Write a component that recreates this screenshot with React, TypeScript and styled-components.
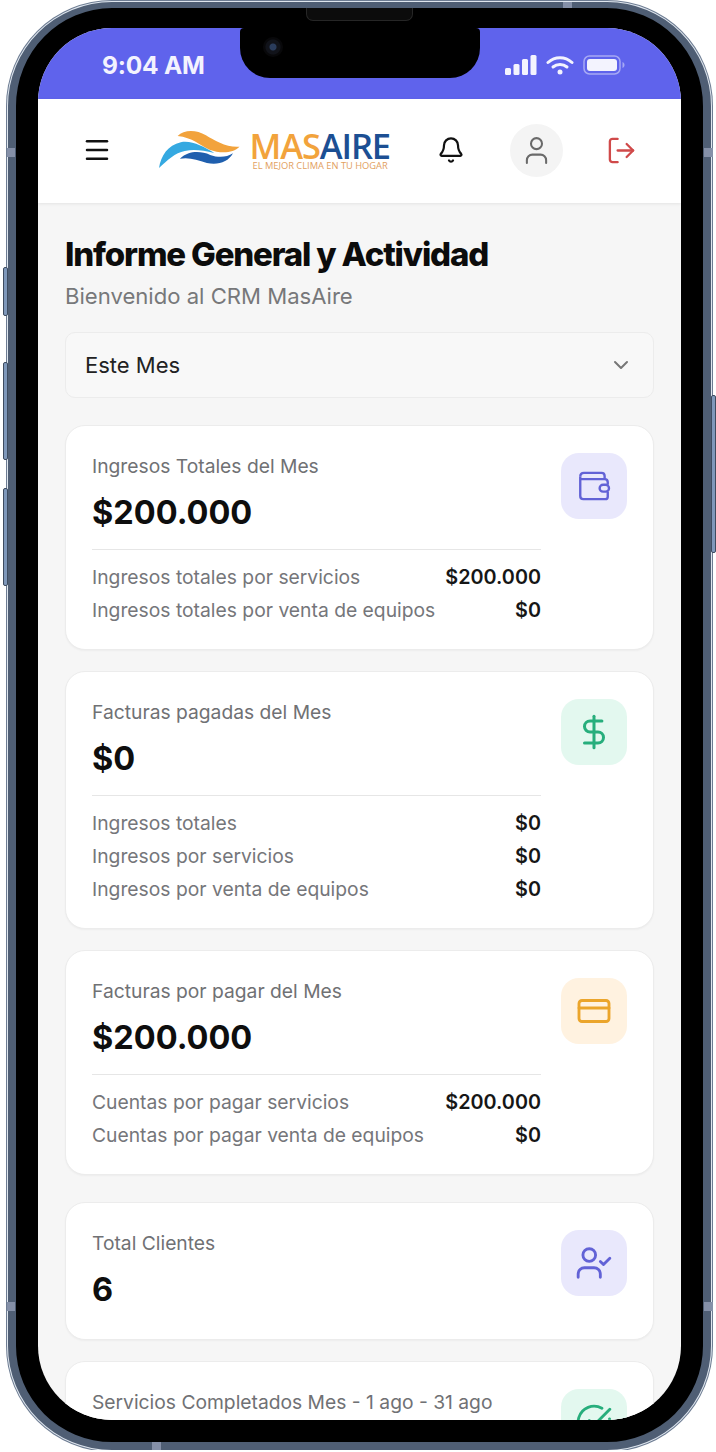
import React, { FC, ReactNode } from 'react';
import styled, { createGlobalStyle } from 'styled-components';
import { Bell, ChevronDown, CircleCheckBig, CreditCard, DollarSign, LogOut, Menu, User, UserCheck } from 'lucide-react';

const summaryCards = [
	{
		title: 'Ingresos Totales del Mes',
		value: '$200.000',
		tone: 'violet',
		icon: 'wallet',
		rows: [
			['Ingresos totales por servicios', '$200.000'],
			['Ingresos totales por venta de equipos', '$0'],
		],
	},
	{
		title: 'Facturas pagadas del Mes',
		value: '$0',
		tone: 'green',
		icon: 'dollar',
		rows: [
			['Ingresos totales', '$0'],
			['Ingresos por servicios', '$0'],
			['Ingresos por venta de equipos', '$0'],
		],
	},
	{
		title: 'Facturas por pagar del Mes',
		value: '$200.000',
		tone: 'amber',
		icon: 'card',
		rows: [
			['Cuentas por pagar servicios', '$200.000'],
			['Cuentas por pagar venta de equipos', '$0'],
		],
	},
	{ title: 'Total Clientes', value: '6', tone: 'violet', icon: 'client', rows: [] },
	{ title: 'Servicios Completados Mes - 1 ago - 31 ago', value: '', tone: 'green', icon: 'done', rows: [] },
];

const tones: Record<string, { bg: string; fg: string }> = {
	violet: { bg: '#e9e8fc', fg: '#6262d6' },
	green: { bg: '#e3f8ef', fg: '#27ae7c' },
	amber: { bg: '#fff2e0', fg: '#eba52b' },
};

const WalletIcon: FC = () => (
	<svg width="40" height="40" viewBox="0 0 32 32" fill="none" stroke="currentColor" strokeWidth="1.9" strokeLinejoin="round">
		<path d="M5 8.500C5 6.600 6.400 5.500 8 5.500h14c1.600 0 2.500 1 2.500 2.500v2.500" />
		<path d="M5 8.500V24c0 1.400 1 2.500 2.500 2.500H25c1.200 0 2-.9 2-2v-4" />
		<path d="M5 10.500h19.500c1.400 0 2.500 1 2.500 2.500v2" />
		<rect x="20.500" y="15" width="7.500" height="5.500" rx="2.750" />
	</svg>
);

const renderIcon = (name: string): ReactNode => {
	if (name === 'wallet') return <WalletIcon />;
	if (name === 'dollar') return <DollarSign size={38} strokeWidth={1.9} />;
	if (name === 'card') return <CreditCard size={36} strokeWidth={1.9} />;
	if (name === 'client') return <UserCheck size={38} strokeWidth={1.8} />;
	return <CircleCheckBig size={38} strokeWidth={1.8} />;
};

const App: FC = () => (
	<>
		<GlobalStyle />
		<Phone>
			<SideButton $left $top={267} $height={49} />
			<SideButton $left $top={362} $height={98} />
			<SideButton $left $top={488} $height={98} />
			<SideButton $top={395} $height={158} />
			<RimBand $x={-9} $y={140} $w={8} $h={9} />
			<RimBand $x={-9} $y={1294} $w={8} $h={9} />
			<RimBand $x={688} $y={140} $w={9} $h={9} />
			<RimBand $x={688} $y={1294} $w={9} $h={9} />
			<RimBand $x={547} $y={-6} $w={9} $h={6} />
			<RimBand $x={136} $y={1434} $w={9} $h={8} />
			<Speaker />
			<Screen>
				<Notch>
					<Camera />
				</Notch>
				<StatusBar>
					<Time>9:04 AM</Time>
					<StatusIcons>
						<svg width="32" height="22" viewBox="0 0 32 22" fill="currentColor">
							<rect x="0" y="14" width="6" height="7" rx="1.5" />
							<rect x="8.500" y="10" width="6" height="11" rx="1.5" />
							<rect x="17" y="5" width="6" height="16" rx="1.5" />
							<rect x="25.500" y="1" width="6" height="20" rx="1.5" />
						</svg>
						<svg width="28" height="22" viewBox="0 0 28 22" fill="none" stroke="currentColor" strokeWidth="3" strokeLinecap="round">
							<path d="M2 8.500C9 2 19 2 26 8.500" />
							<path d="M7 13C11 9.500 17 9.500 21 13" />
							<circle cx="14" cy="18" r="2.500" fill="currentColor" stroke="none" />
						</svg>
						<svg width="42" height="22" viewBox="0 0 42 22" fill="none">
							<rect x="1" y="2" width="36" height="18" rx="5.500" stroke="#fff" strokeOpacity=".45" strokeWidth="1.500" />
							<rect x="4" y="5" width="30" height="12" rx="3" fill="#f3f3fe" />
							<path d="M39.500 8v6c1.300-.6 2-1.700 2-3s-.7-2.400-2-3z" fill="#fff" fillOpacity=".45" />
						</svg>
					</StatusIcons>
				</StatusBar>
				<Header>
					<IconButton $color="#111">
						<Menu size={30} strokeWidth={2} />
					</IconButton>
					<Logo>
						<svg width="83" height="40" viewBox="58 45 250 120">
							<path d="M115 62C135 42 172 42 202 60C228 76 265 98 305 95C285 116 245 116 213 104C185 92 160 66 115 62Z" fill="#f2a33c" />
							<path d="M58 160C64 122 85 90 125 81C160 75 192 94 228 114C192 106 165 102 137 108C107 114 85 135 58 160Z" fill="#35a9e1" />
							<path d="M122 132C150 106 185 108 215 120C240 129 265 128 285 115C270 142 240 152 205 145C175 136 150 126 122 132Z" fill="#1f5fae" />
						</svg>
						<LogoText>
							<LogoName>
								<span>MAS</span>
								<b>AIRE</b>
							</LogoName>
							<LogoTagline>EL MEJOR CLIMA EN TU HOGAR</LogoTagline>
						</LogoText>
					</Logo>
					<IconButton $color="#111">
						<Bell size={28} strokeWidth={1.9} />
					</IconButton>
					<Avatar>
						<User size={33} strokeWidth={1.5} />
					</Avatar>
					<IconButton $color="#d04a4a">
						<LogOut size={31} strokeWidth={1.8} />
					</IconButton>
				</Header>
				<Content>
					<Title>Informe General y Actividad</Title>
					<Subtitle>Bienvenido al CRM MasAire</Subtitle>
					<Select>
						Este Mes
						<ChevronDown size={24} strokeWidth={2} color="#777" />
					</Select>
					<CardList>
						{summaryCards.map((card, i) => (
							<Card key={card.title} $spaced={i === 3}>
								<CardBody>
									<CardTitle>{card.title}</CardTitle>
									{card.value && <CardValue>{card.value}</CardValue>}
									{card.rows.length > 0 && (
										<Rows>
											{card.rows.map(([label, amount]) => (
												<Row key={label}>
													<span>{label}</span>
													<b>{amount}</b>
												</Row>
											))}
										</Rows>
									)}
								</CardBody>
								<IconTile $tone={card.tone}>{renderIcon(card.icon)}</IconTile>
							</Card>
						))}
					</CardList>
				</Content>
			</Screen>
		</Phone>
	</>
);

export default App;

const GlobalStyle = createGlobalStyle`
	html, body {
		margin: 0;
		padding: 0;
		background: #fff;
		overflow: hidden;
	}
	* {
		box-sizing: border-box;
	}
	body {
		font-family: Inter, "Open Sans", sans-serif;
	}
`;

const Phone = styled.div`
	position: relative;
	width: 703px;
	height: 1448px;
	margin: 2px 0 0 8px;
	padding: 20px 22px 22px;
	background: #000;
	border: solid #4f5e74;
	border-width: 6px 8px 8px;
	border-radius: 104px;
	box-shadow: 0 0 0 1px #dfe6ee, 0 0 0 2px #6d7c92;
`;

const SideButton = styled.div<{ $left?: boolean; $top: number; $height: number }>`
	position: absolute;
	top: ${(p) => p.$top - 8}px;
	${(p) => (p.$left ? 'left: -13px;' : 'right: -13px;')}
	width: 5px;
	height: ${(p) => p.$height}px;
	background: #7f98ba;
	border: 1px solid #3e4c60;
	border-radius: 2px;
`;

const RimBand = styled.div<{ $x: number; $y: number; $w: number; $h: number }>`
	position: absolute;
	left: ${(p) => p.$x}px;
	top: ${(p) => p.$y}px;
	width: ${(p) => p.$w}px;
	height: ${(p) => p.$h}px;
	background: #8590a8;
`;

const Speaker = styled.div`
	position: absolute;
	top: 0;
	left: 290px;
	width: 107px;
	height: 13px;
	display: flex;
	background: #0c0c0c;
	border: 1px solid #262626;
	border-top: none;
	border-radius: 0 0 7px 7px;
	z-index: 2;
`;

const Screen = styled.div`
	position: relative;
	height: 100%;
	border-radius: 74px;
	overflow: hidden;
	background: #f6f6f6;
`;

const Notch = styled.div`
	position: absolute;
	top: 0;
	left: 202px;
	width: 240px;
	height: 50px;
	display: flex;
	align-items: flex-start;
	padding: 9px 0 0 23px;
	background: #000;
	border-radius: 4px 4px 30px 30px;
`;

const Camera = styled.div`
	width: 20px;
	height: 20px;
	border-radius: 50%;
	background: radial-gradient(circle, #2a3c5c 0 3px, #11131a 4px 7px, #08080a 8px);
`;

const StatusBar = styled.div`
	height: 71px;
	display: flex;
	align-items: center;
	justify-content: space-between;
	padding: 2px 56px 0 64px;
	background: #5f63ec;
	color: #f3f3fe;
`;

const Time = styled.div`
	font-size: 24.5px;
	font-weight: 700;
	letter-spacing: -0.2px;
`;

const StatusIcons = styled.div`
	display: flex;
	align-items: center;
	gap: 9px;
`;

const Header = styled.div`
	position: relative;
	height: 104px;
	display: flex;
	align-items: center;
	padding: 0 0 2px 44px;
	background: #fff;
	box-shadow: 0 1px 3px rgba(0, 0, 0, 0.08);
`;

const IconButton = styled.div<{ $color: string }>`
	display: flex;
	color: ${(p) => p.$color};
`;

const Logo = styled.div`
	display: flex;
	align-items: center;
	gap: 9px;
	width: 231px;
	margin: 0 47px;
`;

const LogoText = styled.div`
	display: flex;
	flex-direction: column;
	font-family: "Open Sans", sans-serif;
`;

const LogoName = styled.div`
	display: flex;
	font-size: 34.5px;
	line-height: 30px;
	letter-spacing: -1.100px;
	font-weight: 600;
	color: #f2a33c;

	b {
		font-weight: 600;
		color: #1c4f93;
	}
`;

const LogoTagline = styled.div`
	padding-left: 3px;
	font-size: 9.300px;
	line-height: 9px;
	color: #e2a060;
	white-space: nowrap;
`;

const Avatar = styled.div`
	width: 53px;
	height: 53px;
	margin: 0 43px 0 45px;
	display: flex;
	align-items: center;
	justify-content: center;
	border-radius: 50%;
	background: #f4f4f4;
	color: #6a6a6a;
`;

const Content = styled.div`
	padding: 32px 27px 0;
`;

const Title = styled.h1`
	margin: 0;
	font-size: 33px;
	line-height: 38px;
	font-weight: 800;
	letter-spacing: -1.170px;
	color: #0c0c0c;
`;

const Subtitle = styled.div`
	margin-top: 9px;
	font-size: 22.100px;
	line-height: 28px;
	color: #77787a;
`;

const Select = styled.div`
	height: 66px;
	margin-top: 22px;
	display: flex;
	align-items: center;
	justify-content: space-between;
	padding: 0 20px 0 19px;
	background: #f8f8f8;
	border: 1px solid #ececec;
	border-radius: 10px;
	font-size: 22px;
	color: #222;
`;

const CardList = styled.div`
	margin-top: 27px;
	display: flex;
	flex-direction: column;
	gap: 21px;
`;

const Card = styled.div<{ $spaced?: boolean }>`
	display: flex;
	justify-content: space-between;
	align-items: flex-start;
	gap: 20px;
	min-height: 138px;
	margin-top: ${(p) => (p.$spaced ? 6 : 0)}px;
	padding: 27px 26px 22px;
	background: #fff;
	border: 1px solid #ececec;
	border-radius: 20px;
	box-shadow: 0 1px 2px rgba(0, 0, 0, 0.04);
`;

const CardBody = styled.div`
	flex: 1;
	min-width: 0;
`;

const CardTitle = styled.div`
	font-size: 19.250px;
	line-height: 26px;
	color: #707174;
`;

const CardValue = styled.div`
	margin-top: 14px;
	font-size: 32.500px;
	line-height: 40px;
	font-weight: 700;
	color: #0e0e0e;
`;

const Rows = styled.div`
	margin-top: 16px;
	padding-top: 11px;
	border-top: 1px solid #e6e6e6;
`;

const Row = styled.div`
	display: flex;
	justify-content: space-between;
	font-size: 19.300px;
	line-height: 33px;
	color: #75767a;

	b {
		font-size: 19.800px;
		font-weight: 600;
		color: #161616;
	}
`;

const IconTile = styled.div<{ $tone: string }>`
	flex: none;
	width: 66px;
	height: 66px;
	display: flex;
	align-items: center;
	justify-content: center;
	border-radius: 18px;
	background: ${(p) => tones[p.$tone].bg};
	color: ${(p) => tones[p.$tone].fg};
`;
